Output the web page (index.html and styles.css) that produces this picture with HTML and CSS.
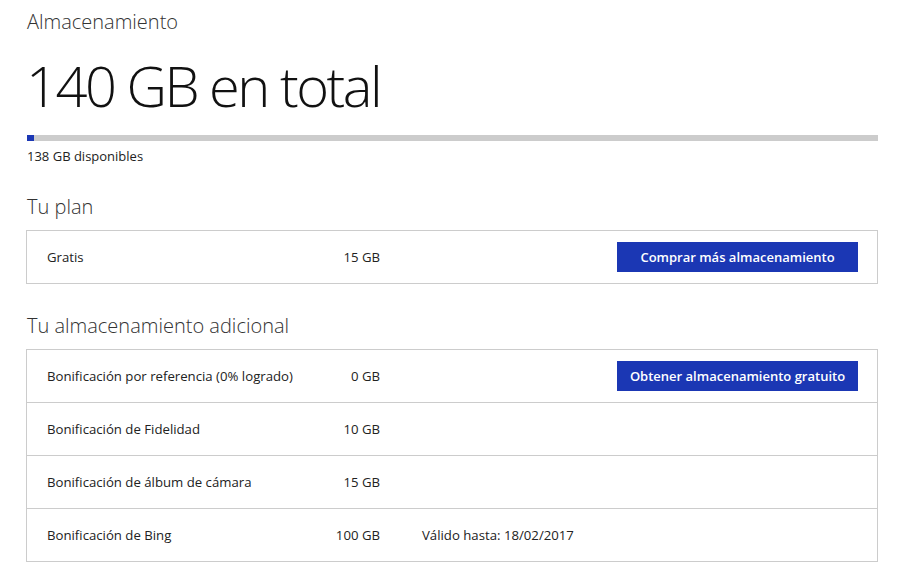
FILE: index.html
```html
<!DOCTYPE html>
<html lang="es">
<head>
<meta charset="utf-8">
<title>Almacenamiento</title>
<link rel="stylesheet" href="styles.css">
</head>
<body>
<main class="page">
  <h1 class="title">Almacenamiento</h1>
  <div class="total">140 GB en total</div>
  <div class="bar"><div class="bar-fill" style="width: 7px"></div></div>
  <div class="available">138 GB disponibles</div>

  <h2 class="section">Tu plan</h2>
  <div class="box">
    <div class="row">
      <span class="label">Gratis</span>
      <span class="amount">15 GB</span>
      <span class="note"></span>
      <button class="btn">Comprar más almacenamiento</button>
    </div>
  </div>

  <h2 class="section">Tu almacenamiento adicional</h2>
  <div class="box">
    <div class="row">
      <span class="label">Bonificación por referencia (0% logrado)</span>
      <span class="amount">0 GB</span>
      <span class="note"></span>
      <button class="btn">Obtener almacenamiento gratuito</button>
    </div>
    <div class="row">
      <span class="label">Bonificación de Fidelidad</span>
      <span class="amount">10 GB</span>
      <span class="note"></span>
    </div>
    <div class="row">
      <span class="label">Bonificación de álbum de cámara</span>
      <span class="amount">15 GB</span>
      <span class="note"></span>
    </div>
    <div class="row">
      <span class="label">Bonificación de Bing</span>
      <span class="amount">100 GB</span>
      <span class="note">Válido hasta: 18/02/2017</span>
    </div>
  </div>
</main>
</body>
</html>
```

FILE: styles.css
```css
html, body {
  margin: 0;
  padding: 0;
  background: #ffffff;
}
body {
  font-family: "Open Sans", "Noto Sans", sans-serif;
  color: #222222;
}
.page {
  width: 852px;
  padding: 0 0 0 26px;
}
.title {
  margin: 8px 0 0 1px;
  font-size: 20px;
  line-height: 28px;
  font-weight: 300;
  color: #333333;
}
.total {
  margin: 17px 0 0 0;
  font-size: 56px;
  line-height: 64px;
  font-weight: 300;
  color: #111111;
  letter-spacing: -2.5px;
}
.bar {
  margin: 18px 0 0 1px;
  height: 6px;
  background: #cccccc;
  display: flex;
}
.bar-fill {
  height: 100%;
  background: #1b37b4;
}
.available {
  margin: 6px 0 0 1px;
  font-size: 13px;
  line-height: 18px;
  color: #222222;
}
.section {
  margin: 28px 0 0 1px;
  font-size: 20px;
  line-height: 28px;
  font-weight: 300;
  color: #333333;
}
.box {
  margin-top: 9px;
  border: 1px solid #cccccc;
}
.row {
  display: grid;
  grid-template-columns: 253px 80px 1fr auto;
  align-items: center;
  height: 52px;
  padding: 0 19px 0 20px;
  font-size: 13.2px;
  color: #222222;
}
.row + .row {
  border-top: 1px solid #cccccc;
}
.amount {
  text-align: right;
}
.note {
  padding-left: 42px;
}
.btn {
  width: 241px;
  height: 30px;
  border: 0;
  border-radius: 0;
  background: #1b37b4;
  color: #ffffff;
  font-family: "Open Sans", "Noto Sans", sans-serif;
  font-size: 13px;
  font-weight: 600;
  padding: 0;
}
```
